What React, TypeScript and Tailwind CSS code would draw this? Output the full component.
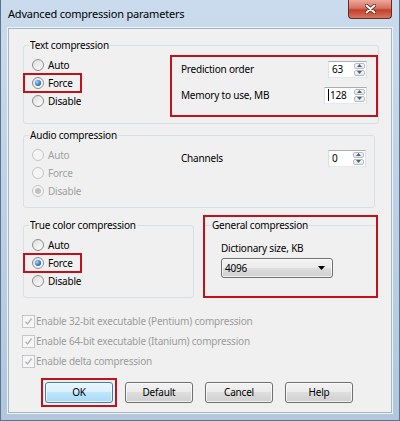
import React from 'react';

const font = { fontFamily: '"Noto Sans", "Open Sans", sans-serif' };

function Radio({ label, checked, disabled }: { label: string; checked?: boolean; disabled?: boolean }) {
  return (
    <div className="flex items-center gap-[4px]">
      <span
        className={`flex h-[12px] w-[12px] items-center justify-center rounded-full border ${
          disabled
            ? 'border-[#c4c6c8] bg-[#f4f4f4]'
            : 'border-[#8e8f8f] bg-[linear-gradient(135deg,#dcdcdc,#ffffff)]'
        }`}
      >
        {checked && (
          <span
            className={`h-[6px] w-[6px] rounded-full ${
              disabled
                ? 'bg-[#c2c2c2]'
                : 'bg-[radial-gradient(circle_at_35%_35%,#9fd8ff,#1c64b4_70%)]'
            }`}
          />
        )}
      </span>
      <span className={disabled ? 'text-[#a0a0a0]' : 'text-black'}>{label}</span>
    </div>
  );
}

function RadioRow({ label, checked, disabled, marked }: { label: string; checked?: boolean; disabled?: boolean; marked?: boolean }) {
  if (marked) {
    return (
      <div className="-my-px -ml-[9px] flex h-[20px] w-[59px] items-center border-2 border-[#c1121c] pl-[7px]">
        <Radio label={label} checked={checked} disabled={disabled} />
      </div>
    );
  }
  return (
    <div className="flex h-[18px] items-center">
      <Radio label={label} checked={checked} disabled={disabled} />
    </div>
  );
}

function Arrow({ up }: { up?: boolean }) {
  return (
    <svg width="5" height="3" viewBox="0 0 5 3">
      <path d={up ? 'M0 3 L2.5 0 L5 3 Z' : 'M0 0 L2.5 3 L5 0 Z'} fill="#4c607a" />
    </svg>
  );
}

function Spin({ value, w, caret }: { value: string; w: string; caret?: boolean }) {
  return (
    <div className={`flex h-[17px] ${w} border border-[#abadb3] border-x-[#dbdfe6] border-b-[#e3e9ef] bg-white`}>
      <span className="flex flex-1 items-center pl-[3px] leading-[15px]">
        {caret && <span className="mr-px h-[12px] w-px bg-black" />}
        {value}
      </span>
      <div className="flex w-[12px] flex-col gap-px py-px pr-px">
        <span className="flex flex-1 items-center justify-center rounded-[2px] border border-[#b6bdc6] bg-[linear-gradient(#f7f8fa,#e3e7ec)]">
          <Arrow up />
        </span>
        <span className="flex flex-1 items-center justify-center rounded-[2px] border border-[#b6bdc6] bg-[linear-gradient(#f7f8fa,#e3e7ec)]">
          <Arrow />
        </span>
      </div>
    </div>
  );
}

function Check({ label }: { label: string }) {
  return (
    <div className="flex h-[20px] items-center gap-[1px]">
      <span className="flex h-[13px] w-[13px] items-center justify-center border border-[#c6c9cc] bg-[#f6f6f6]">
        <svg width="9" height="9" viewBox="0 0 9 9">
          <path d="M1.5 4.8 L3.6 7 L7.6 1.5" fill="none" stroke="#b4b4b4" strokeWidth="1.3" />
        </svg>
      </span>
      <span className="text-[#9c9c9c]">{label}</span>
    </div>
  );
}

function Btn({ label, primary }: { label: string; primary?: boolean }) {
  return (
    <button
      type="button"
      className={`h-[21px] w-[68px] rounded-[3px] border text-black shadow-[inset_0_0_0_1px_rgba(255,255,255,0.7)] ${
        primary
          ? 'border-[#3c7fb1] bg-[linear-gradient(#eaf6fd_0%,#d9f0fc_50%,#bee6fd_50%,#a7d9f5_100%)]'
          : 'border-[#707070] bg-[linear-gradient(#f2f2f2_0%,#ebebeb_50%,#dddddd_50%,#cfcfcf_100%)]'
      }`}
    >
      {label}
    </button>
  );
}

export default function App() {
  return (
    <div
      style={font}
      className="flex h-[421px] w-[400px] flex-col border-x border-b border-[#5b7590] bg-[linear-gradient(#c9dbec,#b2c7dc)] text-[10px] tracking-[-0.2px]"
    >
      {/* title bar */}
      <div className="flex h-[28px] shrink-0 items-start justify-between">
        <span className="pl-[7px] text-[11px] leading-[28px] tracking-[-0.2px] text-black">Advanced compression parameters</span>
        <span className="mr-[7px] flex h-[19px] w-[44px] items-center justify-center rounded-b-[4px] border border-t-0 border-[#6d2a22] bg-[linear-gradient(#eaa99c_0%,#d7725f_45%,#c2402a_55%,#d8745e_100%)]">
          <svg width="11" height="10" viewBox="0 0 11 10">
            <path d="M1.5 1.5 L9.5 8.5 M9.5 1.5 L1.5 8.5" stroke="#4a1a14" strokeWidth="3.4" strokeLinecap="round" />
            <path d="M1.5 1.5 L9.5 8.5 M9.5 1.5 L1.5 8.5" stroke="#ffffff" strokeWidth="2" strokeLinecap="round" />
          </svg>
        </span>
      </div>

      {/* client area */}
      <div className="mx-[7px] mb-[7px] flex-1 border border-[#a4b5c6] bg-[#f0f0f0] pl-[14px] pt-[9px] shadow-[0_0_0_1px_#eef3f8]">
        {/* Text compression */}
        <fieldset className="h-[86px] w-[352px] rounded-[3px] border border-[#d5dfe5]">
          <legend className="ml-[5px] px-[1px] leading-[14px]">Text compression</legend>
          <div className="flex items-start">
            <div className="flex w-[146px] flex-col pl-[8px] pt-[4px]">
              <RadioRow label="Auto" />
              <RadioRow label="Force" checked marked />
              <RadioRow label="Disable" />
            </div>
            <div className="mt-[3px] flex h-[62px] w-[208px] shrink-0 flex-col gap-[2px] border-2 border-[#c1121c] pl-[9px] pr-[9px]">
              <div className="flex h-[24px] items-center justify-between">
                <span>Prediction order</span>
                <Spin value="63" w="w-[39px]" />
              </div>
              <div className="flex h-[24px] items-center justify-between">
                <span>Memory to use, MB</span>
                <Spin value="128" w="w-[43px]" caret />
              </div>
            </div>
          </div>
        </fieldset>

        {/* Audio compression */}
        <fieldset className="mt-[4px] h-[80px] w-[352px] rounded-[3px] border border-[#d5dfe5]">
          <legend className="ml-[5px] px-[1px] leading-[14px]">Audio compression</legend>
          <div className="flex items-start">
            <div className="flex w-[146px] flex-col pl-[8px] pt-[4px]">
              <RadioRow label="Auto" disabled />
              <RadioRow label="Force" disabled />
              <RadioRow label="Disable" checked disabled />
            </div>
            <div className="mt-[4px] flex h-[24px] flex-1 items-center justify-between pl-[11px] pr-[8px]">
              <span>Channels</span>
              <Spin value="0" w="w-[38px]" />
            </div>
          </div>
        </fieldset>

        {/* True color + General */}
        <div className="mt-[7px] flex items-start">
          <fieldset className="mt-[3px] h-[80px] w-[171px] rounded-[3px] border border-[#d5dfe5]">
            <legend className="ml-[5px] px-[1px] leading-[14px]">True color compression</legend>
            <div className="flex flex-col pl-[8px] pt-[4px]">
              <RadioRow label="Auto" />
              <RadioRow label="Force" checked marked />
              <RadioRow label="Disable" />
            </div>
          </fieldset>
          <div className="ml-[9px] h-[83px] w-[175px] border-2 border-[#c1121c]">
            <fieldset className="mt-[1px] border-t border-[#d5dfe5]">
              <legend className="ml-[6px] px-[1px] leading-[14px]">General compression</legend>
              <div className="pl-[16px]">
                <div className="mt-[8px] leading-[16px]">Dictionary size, KB</div>
                <div className="mt-[2px] flex h-[20px] w-[112px] items-center justify-between rounded-[3px] border border-[#707070] bg-[linear-gradient(#f2f2f2_0%,#ebebeb_50%,#dddddd_50%,#cfcfcf_100%)] pl-[3px] pr-[7px] shadow-[inset_0_0_0_1px_rgba(255,255,255,0.7)]">
                  <span>4096</span>
                  <svg width="7" height="4" viewBox="0 0 7 4">
                    <path d="M0 0 L7 0 L3.5 4 Z" fill="#000" />
                  </svg>
                </div>
              </div>
            </fieldset>
          </div>
        </div>

        {/* checkboxes */}
        <div className="ml-[-1px] mt-[13px] flex flex-col">
          <Check label="Enable 32-bit executable (Pentium) compression" />
          <Check label="Enable 64-bit executable (Itanium) compression" />
          <Check label="Enable delta compression" />
        </div>

        {/* buttons */}
        <div className="ml-[22px] mt-[11px] flex gap-[12px]">
          <div className="-m-[4px] border-2 border-[#c1121c] p-[2px]">
            <Btn label="OK" primary />
          </div>
          <Btn label="Default" />
          <Btn label="Cancel" />
          <Btn label="Help" />
        </div>
      </div>
    </div>
  );
}
